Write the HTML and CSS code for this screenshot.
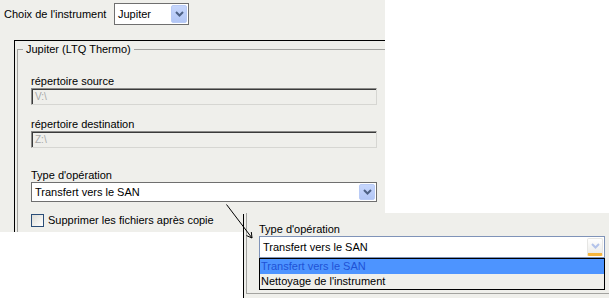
FILE: index.html
```html
<!DOCTYPE html>
<html lang="fr">
<head>
<meta charset="utf-8">
<title>Choix de l'instrument</title>
<link rel="stylesheet" href="styles.css">
</head>
<body>
<div class="page">
  <div class="dialog">
    <div class="top-row">
      <span class="top-label">Choix de l'instrument</span>
      <div class="combo combo-small">
        <span class="combo-text">Jupiter</span>
        <span class="drop-btn"><svg width="9" height="6" viewBox="0 0 9 6"><path d="M1 1 L4.5 4.5 L8 1" fill="none" stroke="#4d6185" stroke-width="2"/></svg></span>
      </div>
    </div>
    <div class="frame">
      <fieldset class="group">
        <legend class="group-title">Jupiter (LTQ Thermo)</legend>
        <div class="group-body">
          <div class="field-label first">répertoire source</div>
          <div class="text-input">V:\</div>
          <div class="field-label">répertoire destination</div>
          <div class="text-input">Z:\</div>
          <div class="field-label op">Type d'opération</div>
          <div class="combo combo-wide">
            <span class="combo-text">Transfert vers le SAN</span>
            <span class="drop-btn"><svg width="9" height="6" viewBox="0 0 9 6"><path d="M1 1 L4.5 4.5 L8 1" fill="none" stroke="#4d6185" stroke-width="2"/></svg></span>
          </div>
          <div class="check-row">
            <span class="checkbox"></span>
            <span class="check-text">Supprimer les fichiers après copie</span>
          </div>
        </div>
      </fieldset>
    </div>
  </div>

  <div class="zoom-panel">
    <div class="zoom-group">
      <div class="zoom-label">Type d'opération</div>
      <div class="combo combo-open">
        <span class="combo-text">Transfert vers le SAN</span>
        <span class="drop-btn drop-btn-hot"><svg width="9" height="6" viewBox="0 0 9 6"><path d="M1 1 L4.5 4.5 L8 1" fill="none" stroke="#b3c3ea" stroke-width="2"/></svg></span>
      </div>
      <ul class="drop-list">
        <li class="item selected">Transfert vers le SAN</li>
        <li class="item">Nettoyage de l'instrument</li>
      </ul>
    </div>
  </div>

  <svg class="arrow" width="609" height="298" viewBox="0 0 609 298">
    <path d="M226.5 204.5 L252 238" stroke="#000" stroke-width="1" fill="none"/>
    <path d="M251.3 232 L252 238 L246.5 235.6" stroke="#000" stroke-width="1" fill="none"/>
  </svg>
</div>
</body>
</html>
```

FILE: styles.css
```css
html, body {
  margin: 0;
  padding: 0;
  background: #ffffff;
}

body {
  font-family: "Liberation Sans", Arial, sans-serif;
  font-size: 11px;
  color: #000;
}

.page {
  position: relative;
  width: 609px;
  height: 298px;
  overflow: hidden;
}

.dialog {
  width: 385px;
  height: 232px;
  background: #efefeb;
  overflow: hidden;
}

.top-row {
  display: flex;
  align-items: center;
  padding: 3px 0 0 4px;
  height: 22px;
}

.top-label {
  flex: 0 0 110px;
  line-height: 13px;
}

.combo {
  display: flex;
  align-items: stretch;
  box-sizing: border-box;
  background: #fff;
  border: 1px solid #6f6f6f;
  padding: 1px;
}

.combo-small {
  width: 75px;
  height: 22px;
}

.combo-text {
  flex: 1;
  display: flex;
  align-items: center;
  padding-left: 2px;
  white-space: nowrap;
}

.drop-btn {
  flex: 0 0 16px;
  display: flex;
  align-items: center;
  justify-content: center;
  box-sizing: border-box;
  background: linear-gradient(#c6d6fc, #b2c6f5);
  border: 1px solid #b9cbf6;
  border-radius: 2px;
}

.frame {
  margin: 15px 0 0 14px;
  width: 400px;
  height: 300px;
  border-top: 1px solid #000;
  border-left: 1px solid #000;
}

.group {
  margin: 2px 0 0 2px;
  padding: 0 0 0 5px;
  width: 390px;
  height: 260px;
  box-sizing: border-box;
  border: 1px solid #a3a3a0;
  min-width: 0;
}

.group-title {
  padding: 0 3px;
  line-height: 13px;
}

.group-body {
  padding-left: 8px;
}

.field-label {
  line-height: 13px;
  height: 13px;
  margin-top: 13px;
}

.field-label.first {
  margin-top: 19px;
}

.field-label.op {
  margin-top: 21px;
}

.text-input {
  box-sizing: border-box;
  width: 346px;
  height: 17px;
  border: 1px solid;
  border-color: #8a8a88 #d6d6d2 #d6d6d2 #8a8a88;
  box-shadow: inset 1px 1px 0 #3a3a3a;
  padding-left: 3px;
  color: #a8a8a8;
  font-size: 10px;
  line-height: 15px;
}

.combo-wide {
  width: 346px;
  height: 20px;
}

.check-row {
  display: flex;
  align-items: center;
  margin-top: 11px;
  height: 15px;
}

.checkbox {
  width: 13px;
  height: 13px;
  box-sizing: border-box;
  border: 1px solid #2a4d78;
  background: linear-gradient(135deg, #dcdcd6, #ffffff);
  margin-right: 4px;
}

.check-text {
  line-height: 13px;
}

.zoom-panel {
  position: absolute;
  left: 243px;
  top: 213px;
  right: 0;
  bottom: 0;
  background: #efefeb;
}

.zoom-panel::before {
  content: "";
  position: absolute;
  left: 0;
  top: 1px;
  bottom: 0;
  width: 1px;
  background: #000;
}

.zoom-group {
  margin-left: 3px;
  height: 80px;
  border-left: 1px solid #a3a3a0;
  border-bottom: 1px solid #a3a3a0;
  padding-left: 12px;
}

.zoom-label {
  padding-top: 10px;
  line-height: 13px;
  height: 13px;
}

.combo-open {
  width: 346px;
  height: 22px;
  border-color: #7f93b8;
}

.drop-btn-hot {
  background: linear-gradient(#ffffff, #ececea);
  border: 1px solid #e6e6e4;
  border-bottom: 3px solid #f6b53c;
}

.drop-list {
  list-style: none;
  margin: 0;
  padding: 0;
  width: 346px;
  box-sizing: border-box;
  border: 1px solid #000;
  background: #efefeb;
}

.item {
  height: 15px;
  line-height: 15px;
  padding-left: 1px;
  white-space: nowrap;
}

.item.selected {
  background: #4d94ff;
  color: #1f52d6;
}

.arrow {
  position: absolute;
  left: 0;
  top: 0;
  pointer-events: none;
}
```
